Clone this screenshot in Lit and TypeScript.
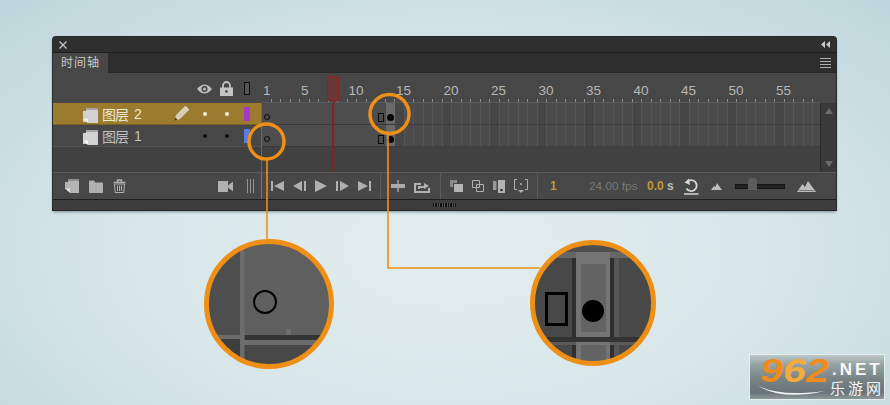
import { LitElement, css, html, svg } from 'lit'
import { customElement } from 'lit/decorators.js'

const FRAME_W = 9.5
const range = (n: number, from = 1) => Array.from({ length: n }, (_, i) => i + from)

const icons: Record<string, unknown> = {
  newLayer: svg`<svg width="14" height="14" viewBox="0 0 14 14"><path d="M0 3H3V0H14V14H5V10H0Z" fill="#b4b4b4"/><path d="M3 0H14V2H3Z" fill="#8e8e8e"/><path d="M5 14L0 9.500H5Z" fill="#e2e2e2"/></svg>`,
  folder: svg`<svg width="14" height="13" viewBox="0 0 14 13"><path d="M0 1.500Q0 .5 1 .5H5L6.500 2.500H13Q14 2.500 14 3.500V12Q14 13 13 13H1Q0 13 0 12Z" fill="#b0b0b0"/></svg>`,
  trash: svg`<svg width="13" height="14" viewBox="0 0 13 14" fill="none" stroke="#b0b0b0" stroke-width="1"><path d="M.5 3.500H12.500M4.500 3V1H8.500V3" stroke-width="1.400"/><path d="M1.500 5H11.500L10.800 13.500H2.200Z"/><path d="M4.500 6.500V12M6.500 6.500V12M8.500 6.500V12"/></svg>`,
  camera: svg`<svg width="15" height="11" viewBox="0 0 15 11"><path d="M0 0H10V11H0ZM10 4.500L15 .5V10.500L10 6.500Z" fill="#b0b0b0"/></svg>`,
  bars: svg`<svg width="7" height="14" viewBox="0 0 7 14" fill="none" stroke="#949494"><path d="M.5 0V14M3.500 0V14M6.500 0V14"/></svg>`,
  first: svg`<svg width="13" height="10" viewBox="0 0 13 10"><path d="M0 0H2V10H0ZM13 0V10L3 5Z" fill="#b0b0b0"/></svg>`,
  prev: svg`<svg width="13" height="10" viewBox="0 0 13 10"><path d="M9 0V10L0 5ZM11 0H13V10H11Z" fill="#b0b0b0"/></svg>`,
  play: svg`<svg width="12" height="12" viewBox="0 0 12 12"><path d="M0 0L12 6L0 12Z" fill="#b0b0b0"/></svg>`,
  next: svg`<svg width="13" height="10" viewBox="0 0 13 10"><path d="M0 0H2V10H0ZM4 0L13 5L4 10Z" fill="#b0b0b0"/></svg>`,
  last: svg`<svg width="13" height="10" viewBox="0 0 13 10"><path d="M0 0L10 5L0 10ZM11 0H13V10H11Z" fill="#b0b0b0"/></svg>`,
  center: svg`<svg width="14" height="12" viewBox="0 0 14 12"><path d="M6 0H8V12H6Z" fill="#8e8e8e"/><path d="M0 4H14V8H0Z" fill="#aaa"/></svg>`,
  exportIcon: svg`<svg width="16" height="13" viewBox="0 0 16 13"><path d="M0 3H7V5H2V11H14V8H16V13H0Z" fill="#b0b0b0"/><path d="M4 9V6H10V3L15 6L10 9V8H6V9Z" fill="#b0b0b0"/></svg>`,
  onion: svg`<svg width="13" height="12" viewBox="0 0 13 12"><path d="M0 0H7V3H3V7H0Z" fill="#8a8a8a"/><path d="M4 4H13V12H4Z" fill="#b4b4b4"/></svg>`,
  onionOutline: svg`<svg width="12" height="12" viewBox="0 0 12 12" fill="none" stroke="#b0b0b0"><path d="M.5.5H7.500V7.500H.5Z"/><path d="M4.500 4.500H11.500V11.500H4.500Z"/></svg>`,
  editMulti: svg`<svg width="12" height="13" viewBox="0 0 12 13"><path d="M0 1H3.500V10H0Z" fill="#999"/><path d="M5 0H12V13H5Z" fill="#b4b4b4"/><circle cx="8.500" cy="10" r="1.300" fill="#333"/></svg>`,
  markers: svg`<svg width="14" height="14" viewBox="0 0 14 14" fill="none" stroke="#b0b0b0"><path d="M3 .5H.5V10.500H3M11 .5H13.500V10.500H11"/><circle cx="7" cy="5" r="1" fill="#b0b0b0" stroke="none"/><path d="M4 11H10L7 14Z" fill="#b0b0b0" stroke="none"/></svg>`,
  loop: svg`<svg width="16" height="17" viewBox="0 0 16 17" fill="none" stroke="#d4d4d4" stroke-width="1.800"><path d="M4.500 3.500A5.500 5.500 0 1 1 3.500 10.500"/><path d="M6 .5L1.500 4.500L7 7" fill="#d4d4d4" stroke="none"/><path d="M1 16H15.500" stroke-width="1.300"/></svg>`,
  smallHills: svg`<svg width="11" height="7" viewBox="0 0 11 7"><path d="M0 7L3 3L4.500 4L6 0L11 7Z" fill="#bdbdbd"/></svg>`,
  largeHills: svg`<svg width="19" height="11" viewBox="0 0 19 11"><path d="M0 11L5.500 3L8 6L11 0L19 11Z" fill="#bdbdbd"/><path d="M2 9.500H17" stroke="#777" stroke-width="1"/></svg>`,
}

const eyeIcon = svg`<svg width="15" height="10" viewBox="0 0 15 10"><path d="M0 5Q7.500 -4 15 5Q7.500 14 0 5Z" fill="#bdbdbd"/><circle cx="7.500" cy="5" r="3" fill="#444"/><circle cx="7.500" cy="5" r="1.500" fill="#bdbdbd"/></svg>`
const lockIcon = svg`<svg width="13" height="15" viewBox="0 0 13 15"><path d="M3 7V4.500A3.500 3.500 0 0 1 10 4.500V7" fill="none" stroke="#c4c4c4" stroke-width="1.800"/><path d="M0 6.500H13V15H0Z" fill="#c4c4c4"/><circle cx="6.500" cy="10.500" r="1.400" fill="#555"/></svg>`
const pencilIcon = svg`<svg width="15" height="15" viewBox="0 0 15 15"><path d="M0 15L2 9L10 1L14 5L6 13Z" fill="#d6cdb6"/><path d="M10 1L11.500 0L15 3.500L14 5Z" fill="#efe6d2"/><path d="M0 15L1.200 11.500L3.500 13.800Z" fill="#4a3d20"/></svg>`
const layerIcon = svg`<svg width="15" height="15" viewBox="0 0 15 15"><path d="M0 3H3V0H15V15H5V14H0Z" fill="#d2d2d2"/><path d="M3 0H15V2H3Z" fill="#a4a4a4"/><path d="M5 15L0 10.500H5Z" fill="#f2f2f2"/></svg>`
const closeIcon = svg`<svg width="8" height="8" viewBox="0 0 8 8" fill="none" stroke="#c8c8c8" stroke-width="1.200"><path d="M.5.5L7.500 7.500M7.500.5L.5 7.500"/></svg>`

@customElement('app-root')
export class AppRoot extends LitElement {

  renderLayer(num: number, active: boolean, color: string) {
    return html`
      <div class="layer ${active ? 'active' : ''}">
        <span class="layer-icon">${layerIcon}</span>
        <span class="layer-name">图层</span>
        <span class="layer-num">${num}</span>
        <span class="pencil">${active ? pencilIcon : ''}</span>
        <span class="dot"></span>
        <span class="dot second"></span>
        <span class="swatch" style="background:${color}"></span>
      </div>
    `
  }

  renderFrames() {
    return html`
      <div class="frame-row">
        <div class="span">
          <span class="key-open"></span>
          <span class="key-blank"></span>
        </div>
        <div class="current"><span class="key-full"></span></div>
        ${range(45, 15).map((f) => html`<div class="cell ${f % 5 === 0 ? 'fifth' : ''}"></div>`)}
      </div>
    `
  }

  renderCallouts() {
    return svg`
      <svg class="callouts" width="890" height="405" viewBox="0 0 890 405">
        <defs>
          <clipPath id="c1"><circle cx="269" cy="304" r="62"/></clipPath>
          <clipPath id="c2"><circle cx="593" cy="303" r="60"/></clipPath>
        </defs>
        <g fill="none" stroke="#ee8f16">
          <path d="M267 160V240" stroke-width="1.600"/>
          <path d="M388 134V268H540" stroke-width="1.600"/>
          <circle cx="266.500" cy="141.500" r="17.500" stroke-width="3.500"/>
          <circle cx="389.500" cy="114" r="19.500" stroke-width="3.500"/>
        </g>
        <g clip-path="url(#c1)">
          <rect x="200" y="235" width="140" height="140" fill="#5f5f5f"/>
          <rect x="200" y="235" width="40" height="140" fill="#4e4e4e"/>
          <rect x="244" y="335" width="100" height="5" fill="#343434"/>
          <rect x="200" y="335" width="40" height="4" fill="#6c6c6c"/>
          <rect x="240" y="340" width="100" height="5" fill="#6c6c6c"/>
          <rect x="200" y="339" width="40" height="40" fill="#3e3e3e"/>
          <rect x="244" y="345" width="100" height="30" fill="#474747"/>
          <rect x="240" y="235" width="4.500" height="140" fill="#6c6c6c"/>
          <rect x="286" y="329" width="5" height="6" fill="#6c6c6c"/>
          <circle cx="265" cy="302" r="11" fill="none" stroke="#000" stroke-width="2"/>
        </g>
        <g clip-path="url(#c2)">
          <rect x="530" y="240" width="130" height="130" fill="#484848"/>
          <rect x="530" y="240" width="130" height="12" fill="#4f4f4f"/>
          <rect x="530" y="252" width="130" height="6" fill="#666"/>
          <rect x="572" y="258" width="4" height="110" fill="#2f2f2f"/>
          <rect x="610" y="258" width="4" height="110" fill="#2f2f2f"/>
          <rect x="614" y="258" width="5" height="110" fill="#565656"/>
          <rect x="576" y="252" width="34" height="85" fill="#747474"/>
          <rect x="581" y="264" width="25" height="68" fill="#636363"/>
          <rect x="530" y="337" width="130" height="5" fill="#333"/>
          <rect x="530" y="342" width="130" height="3" fill="#5a5a5a"/>
          <rect x="576" y="342" width="34" height="30" fill="#747474"/>
          <rect x="581" y="345" width="25" height="30" fill="#636363"/>
          <rect x="546.500" y="293.500" width="20" height="31" fill="none" stroke="#000" stroke-width="3"/>
          <circle cx="593" cy="311" r="11" fill="#000"/>
        </g>
        <g fill="none" stroke="#ee8f16" stroke-width="5">
          <circle cx="269" cy="304" r="62.500"/>
          <circle cx="593" cy="303" r="60.500"/>
        </g>
      </svg>
    `
  }

  render() {
    return html`
      <section class="panel">
        <header class="title-bar">
          ${closeIcon}
          <svg width="9" height="7" viewBox="0 0 9 7"><path d="M4 0V7L0 3.500ZM9 0V7L5 3.500Z" fill="#c8c8c8"/></svg>
        </header>
        <div class="tab-bar">
          <span class="tab">时间轴</span>
          <span class="menu"><i></i><i></i><i></i><i></i></span>
        </div>
        <div class="ruler-row">
          <div class="ruler-head">
            <span class="head-icon eye">${eyeIcon}</span>
            <span class="head-icon lock">${lockIcon}</span>
            <span class="outline"></span>
          </div>
          <div class="ruler">
            ${range(58).map((f) => html`
              <div class="tick">${f === 1 || f % 5 === 0 ? html`<span>${f}</span>` : ''}</div>
            `)}
            <div class="playhead"></div>
          </div>
        </div>
        <div class="body">
          <div class="layers">
            ${this.renderLayer(2, true, '#a537c9')}
            ${this.renderLayer(1, false, '#5a7be0')}
          </div>
          <div class="frames">
            ${this.renderFrames()}
            ${this.renderFrames()}
            <div class="playline"></div>
          </div>
          <div class="scrollbar">
            <span class="arrow up"></span>
            <span class="arrow down"></span>
          </div>
        </div>
        <div class="toolbar">
          <div class="group layer-tools">
            ${icons.newLayer}${icons.folder}${icons.trash}
            <span class="push"></span>
            ${icons.camera}${icons.bars}
          </div>
          <div class="group transport">
            ${icons.first}${icons.prev}${icons.play}${icons.next}${icons.last}
          </div>
          <div class="group centre">${icons.center}${icons.exportIcon}</div>
          <div class="group onion">
            ${icons.onion}${icons.onionOutline}${icons.editMulti}${icons.markers}
          </div>
          <div class="group status">
            <span class="value frame-no">1</span>
            <span class="fps">24.00 fps</span>
            <span class="time"><span class="value">0.0</span> s</span>
            <span class="loop">${icons.loop}</span>
            ${icons.smallHills}
            <span class="slider"><i></i></span>
            ${icons.largeHills}
          </div>
        </div>
        <footer class="grip-bar"><span class="grip"></span></footer>
      </section>
      ${this.renderCallouts()}
      <div class="mark">
        <span class="mark-num"><b>9</b><b class="six">6</b><b>2</b></span>
        <div class="mark-side">
          <span class="mark-net">.NET</span>
          <span class="mark-cn">乐游网</span>
        </div>
        <svg class="swoosh" width="70" height="14" viewBox="0 0 70 14"><path d="M0 1Q20 13 68 7Q24 17 0 1Z" fill="#f2f2f2"/></svg>
      </div>
    `
  }

  static styles = css`
    :host {
      display: block;
      position: relative;
      width: 890px;
      height: 405px;
      box-sizing: border-box;
      padding: 37px 0 0 53px;
      overflow: hidden;
      font-family: "Liberation Sans", "Noto Sans CJK SC", sans-serif;
      background: radial-gradient(ellipse 620px 340px at 450px 250px, #e2edef 0%, #d9e7ea 50%, #bfd7dc 100%);
    }
    svg { display: block; flex: none; }

    .panel {
      width: 783px;
      height: 173px;
      display: flex;
      flex-direction: column;
      background: #444;
      border-radius: 3px 3px 0 0;
      box-shadow: 0 0 0 1px #26282a, 0 2px 3px rgba(40, 60, 70, 0.5);
      overflow: hidden;
    }

    .title-bar {
      height: 16px;
      flex: none;
      display: flex;
      justify-content: space-between;
      align-items: center;
      padding: 0 6px 0 6px;
      background: #2f2f2f;
      border-bottom: 1px solid #1f1f1f;
      box-sizing: border-box;
    }

    .tab-bar {
      height: 20px;
      flex: none;
      display: flex;
      justify-content: space-between;
      align-items: center;
      background: #2d2d2d;
      border-bottom: 1px solid #262626;
      box-sizing: border-box;
    }
    .tab {
      width: 55px;
      height: 20px;
      line-height: 20px;
      text-align: center;
      font-size: 12px;
      color: #c8c8c8;
      background: #474747;
      letter-spacing: 1px;
    }
    .menu { display: flex; flex-direction: column; gap: 2px; padding-right: 5px; }
    .menu i { display: block; width: 11px; height: 1px; background: #b0b0b0; }

    .ruler-row { height: 30px; flex: none; display: flex; background: #474747; }
    .ruler-head { width: 209px; flex: none; display: flex; align-items: center; padding-top: 1px; box-sizing: border-box; }
    .head-icon { display: block; }
    .eye { margin-left: 144px; }
    .lock { margin-left: 8px; }
    .outline {
      width: 4px;
      height: 11px;
      margin-left: 11px;
      border: 1px solid #0e0e0e;
      background: #555;
    }
    .ruler {
      position: relative;
      width: 558px;
      flex: none;
      display: flex;
      box-sizing: border-box;
      border-bottom: 1px solid #5a5a5a;
    }
    .tick {
      width: ${FRAME_W}px;
      flex: none;
      position: relative;
      background: linear-gradient(#8c8c8c, #8c8c8c) right 26px / 1px 3px no-repeat;
    }
    .tick span {
      position: absolute;
      left: 1px;
      top: 10px;
      font-size: 13.500px;
      line-height: 16px;
      color: #b8b8b8;
    }
    .playhead {
      position: absolute;
      left: 65px;
      top: 3px;
      width: 10px;
      height: 23px;
      background: #6a3636;
      border: 1px solid #8e2222;
      border-radius: 2px;
    }
    .playhead::after {
      content: "";
      position: absolute;
      left: 4.500px;
      top: 24px;
      width: 2px;
      height: 3px;
      background: #7e2424;
    }

    .body { height: 69px; flex: none; display: flex; position: relative; background: #414141; }
    .layers { width: 209px; flex: none; border-right: 1px solid #6a6a6a; box-sizing: border-box; }
    .layer {
      height: 22px;
      display: flex;
      align-items: center;
      color: #c2c2c2;
      border-bottom: 1px solid #525252;
      box-sizing: border-box;
      background: #474747;
    }
    .layer.active { background: #9b7c2e; color: #efe7d2; border-bottom-color: #7a6225; }
    .layer-icon { margin-left: 30px; padding-top: 3px; }
    .layer-name { margin-left: 4px; font-size: 14px; letter-spacing: -1px; width: 27px; }
    .layer-num { margin-left: 5px; font-size: 14px; width: 8px; }
    .pencil { width: 15px; height: 15px; margin-left: 32px; }
    .dot { width: 4px; height: 4px; border-radius: 50%; margin-left: 14px; background: #0d0d0d; }
    .dot.second { margin-left: 18px; }
    .active .dot { background: #f5f0e0; }
    .swatch { width: 6px; height: 14px; margin-left: 15px; }

    .frames { width: 558px; flex: none; position: relative; }
    .frame-row { height: 22px; display: flex; overflow: hidden; }
    .span {
      position: relative;
      width: 123.500px;
      flex: none;
      background: #4d4d4d;
      border-bottom: 1px solid #3a3a3a;
      box-sizing: border-box;
    }
    .key-open {
      position: absolute;
      left: 1.500px;
      top: 11px;
      width: 4px;
      height: 4px;
      border: 1px solid #0b0b0b;
      border-radius: 50%;
    }
    .key-blank {
      position: absolute;
      right: 2px;
      top: 10px;
      width: 4px;
      height: 7px;
      border: 1px solid #0b0b0b;
    }
    .current {
      position: relative;
      width: ${FRAME_W}px;
      flex: none;
      background: #6a6a6a;
      border-bottom: 1px solid #3a3a3a;
      box-sizing: border-box;
    }
    .key-full {
      position: absolute;
      left: 1.500px;
      top: 11px;
      width: 7px;
      height: 7px;
      border-radius: 50%;
      background: #050505;
    }
    .cell {
      width: ${FRAME_W}px;
      flex: none;
      box-sizing: border-box;
      background: #4b4b4b;
      border-right: 1px solid #555;
      border-bottom: 1px solid #3d3d3d;
    }
    .cell.fifth { background: #464646; }
    .playline {
      position: absolute;
      left: 70px;
      top: 0;
      bottom: 0;
      width: 2px;
      background: #7e2424;
    }

    .scrollbar {
      flex: 1;
      display: flex;
      flex-direction: column;
      justify-content: space-between;
      align-items: center;
      padding: 5px 0;
      box-sizing: border-box;
      background: #3a3a3a;
      border-left: 1px solid #2c2c2c;
    }
    .arrow { width: 0; height: 0; border-left: 4px solid transparent; border-right: 4px solid transparent; }
    .up { border-bottom: 6px solid #6c6c6c; }
    .down { border-top: 6px solid #6c6c6c; }

    .toolbar {
      height: 28px;
      flex: none;
      display: flex;
      background: #474747;
      border-top: 1px solid #5a5a5a;
      border-bottom: 1px solid #1e1e1e;
      box-sizing: border-box;
    }
    .group { display: flex; align-items: center; height: 100%; box-sizing: border-box; border-right: 1px solid #5c5c5c; }
    .layer-tools { width: 209px; padding: 0 7px 0 12px; gap: 10px; border-right-color: #767676; }
    .push { flex: 1; }
    .layer-tools svg:nth-of-type(4) { margin-right: 4px; }
    .transport { width: 119px; padding-left: 9px; gap: 9px; }
    .centre { width: 60px; padding-left: 10px; gap: 9px; }
    .onion { width: 97px; padding-left: 9px; gap: 9px; }
    .status { border: none; flex: 1; font-size: 12px; color: #777; }
    .value { color: #bd9a32; }
    .frame-no { margin-left: 12px; width: 39px; font-weight: bold; }
    .fps { width: 58px; font-size: 11.800px; }
    .time { width: 36px; color: #bdbdbd; font-weight: bold; }
    .loop { width: 28px; }
    .slider {
      position: relative;
      display: block;
      width: 50px;
      height: 5px;
      margin: 0 12px 0 13px;
      background: #222;
      border: 1px solid #161616;
      box-sizing: border-box;
    }
    .slider i {
      position: absolute;
      left: 12px;
      top: -7px;
      width: 9px;
      height: 12px;
      background: #5c5c5c;
      border-radius: 4px 4px 1px 1px;
    }

    .grip-bar {
      flex: 1;
      display: flex;
      justify-content: center;
      align-items: center;
      background: #3d3d3d;
    }
    .grip {
      width: 23px;
      height: 4px;
      background: repeating-linear-gradient(90deg, #111 0 1.500px, #555 1.500px 2.500px);
    }

    .callouts { position: absolute; left: 0; top: 0; pointer-events: none; }

    .mark {
      position: absolute;
      left: 750px;
      top: 355px;
      width: 134px;
      height: 44px;
      box-sizing: border-box;
      padding: 0 0 0 10px;
      display: flex;
      background: linear-gradient(#bcc8c8 0%, #97a3a3 22%, #778384 55%, #69747a 85%, #8c9898 100%);
      outline: 1px solid #e4ecec;
    }
    .mark-num {
      color: #f08c1c;
      font-size: 33px;
      line-height: 31px;
      font-style: italic;
      transform: scaleX(1.250);
      transform-origin: left center;
      width: 72px;
      flex: none;
    }
    .mark-num .six { color: #f5ab3a; }
    .mark-side { display: flex; flex-direction: column; color: #f6f8f8; }
    .mark-net {
      font-size: 17px;
      line-height: 18px;
      font-weight: bold;
      letter-spacing: 3px;
      margin-top: 6px;
    }
    .mark-cn { font-size: 15px; line-height: 16px; letter-spacing: 3px; margin-top: 2px; margin-left: -2px; }
    .swoosh { position: absolute; left: 7px; top: 29px; }
  `
}
